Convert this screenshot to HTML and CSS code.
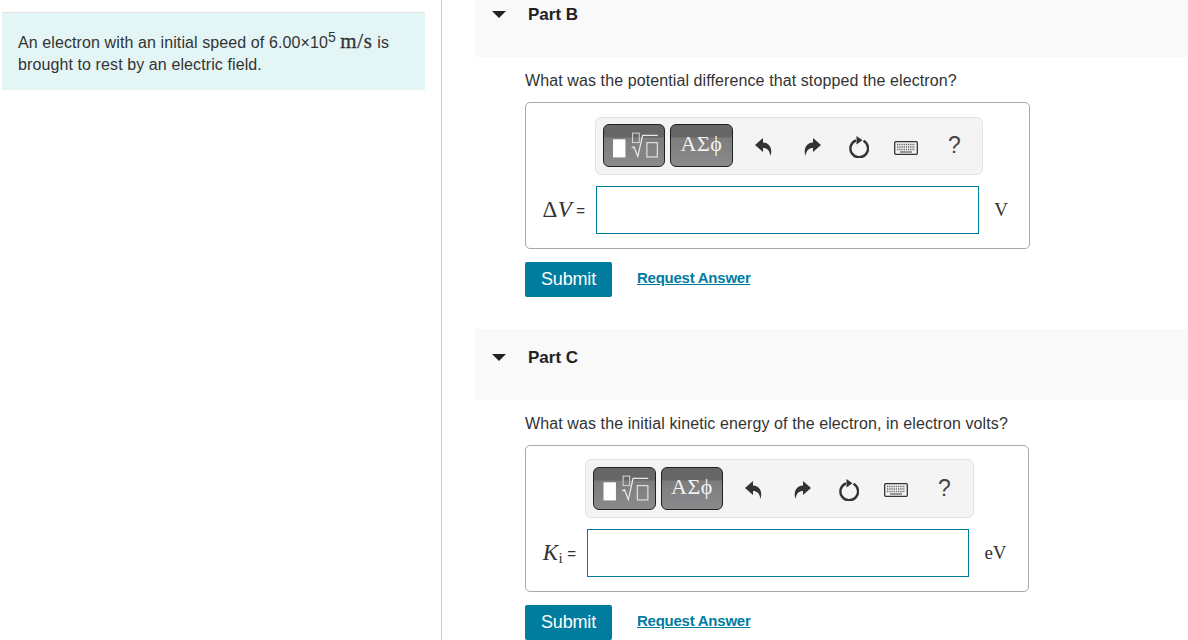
FILE: index.html
```html
<!DOCTYPE html>
<html lang="en">
<head>
<meta charset="utf-8">
<title>Electron stopped by an electric field</title>
<link rel="stylesheet" href="styles.css">
</head>
<body>
<svg class="defs" width="0" height="0" aria-hidden="true">
  <symbol id="i-undo" viewBox="0 0 18 18"><path d="M8 0 0 7l8 7v-4c4 0 6.500 2 7.500 8C18 10 14 4.500 8 4.500z" fill="#333"/></symbol>
  <symbol id="i-redo" viewBox="0 0 18 18"><path d="M10 0l8 7-8 7v-4c-4 0-6.500 2-7.500 8C0 10 4 4.500 10 4.500z" fill="#333"/></symbol>
  <symbol id="i-reset" viewBox="0 0 20 22"><path d="M7 4.300A8.800 8.800 0 1 0 14.500 4.800" fill="none" stroke="#333" stroke-width="2.400"/><path d="M7.500 0v8.500L13.500 4.200z" fill="#333"/></symbol>
  <symbol id="i-keys" viewBox="0 0 24 14"><rect x=".7" y=".7" width="22.600" height="12.600" rx="1" fill="#f4f4f4" stroke="#333" stroke-width="1.300"/><path d="M3 3.500h18M3 6h18M3 8.500h18" stroke="#666" stroke-width="1.300" stroke-dasharray="1.300 .9"/><path d="M6 11h12" stroke="#666" stroke-width="1.300"/></symbol>
  <symbol id="i-templates" viewBox="0 0 62 43"><rect x="9" y="15" width="13" height="19" fill="#fff"/><rect x="29.500" y="8.500" width="7" height="10" fill="none" stroke="#ddd"/><path d="M28.500 24l2.500-1 4 10 5-22h16" fill="none" stroke="#e8e8e8" stroke-width="1.300"/><rect x="44.500" y="18.500" width="11" height="15" fill="none" stroke="#ddd" stroke-width="1.300"/></symbol>
</svg>
<div class="page">
  <aside class="side">
    <div class="intro">
      An electron with an initial speed of 6.00×10<sup class="pow">5</sup> <span class="math-unit">m/s</span> is brought to rest by an electric field.
    </div>
  </aside>
  <main class="main">
    <section class="part part-b">
      <h2 class="part-head"><span class="caret"></span><span class="part-title">Part B</span></h2>
      <p class="question">What was the potential difference that stopped the electron?</p>
      <div class="answer">
        <div class="toolbar">
          <span class="tool-btn tool-tpl"><svg class="tpl-icon"><use href="#i-templates"/></svg></span>
          <span class="tool-btn tool-sym">ΑΣϕ</span>
          <svg class="ico ico-undo"><use href="#i-undo"/></svg>
          <svg class="ico ico-redo"><use href="#i-redo"/></svg>
          <svg class="ico ico-reset"><use href="#i-reset"/></svg>
          <svg class="ico ico-keys"><use href="#i-keys"/></svg>
          <span class="help">?</span>
        </div>
        <div class="entry">
          <span class="label"><span class="math">Δ<i>V</i></span><span class="eq">=</span></span>
          <input class="field" type="text" aria-label="Delta V">
          <span class="unit">V</span>
        </div>
      </div>
      <div class="actions">
        <button class="submit" type="button">Submit</button>
        <a class="reveal" href="#">Request Answer</a>
      </div>
    </section>
    <section class="part part-c">
      <h2 class="part-head"><span class="caret"></span><span class="part-title">Part C</span></h2>
      <p class="question">What was the initial kinetic energy of the electron, in electron volts?</p>
      <div class="answer">
        <div class="toolbar">
          <span class="tool-btn tool-tpl"><svg class="tpl-icon"><use href="#i-templates"/></svg></span>
          <span class="tool-btn tool-sym">ΑΣϕ</span>
          <svg class="ico ico-undo"><use href="#i-undo"/></svg>
          <svg class="ico ico-redo"><use href="#i-redo"/></svg>
          <svg class="ico ico-reset"><use href="#i-reset"/></svg>
          <svg class="ico ico-keys"><use href="#i-keys"/></svg>
          <span class="help">?</span>
        </div>
        <div class="entry">
          <span class="label"><span class="math"><i>K</i><sub class="idx">i</sub></span><span class="eq">=</span></span>
          <input class="field" type="text" aria-label="K i">
          <span class="unit">eV</span>
        </div>
      </div>
      <div class="actions">
        <button class="submit" type="button">Submit</button>
        <a class="reveal" href="#">Request Answer</a>
      </div>
    </section>
  </main>
</div>
</body>
</html>
```
FILE: styles.css
```css
* { box-sizing: border-box; }
html, body { margin: 0; padding: 0; height: 640px; overflow: hidden; background: #fff; }
body { font-family: "Liberation Sans", Arial, sans-serif; font-size: 16px; color: #333; }
.defs { position: absolute; }
.page { display: flex; height: 640px; }

.side { width: 442px; flex: none; border-right: 1px solid #ccc; padding: 12px 16px 0 2px; }
.intro { height: 78px; background: #e4f5f6; border-top: 1px solid #e0e0e0; padding: 17px 16px 0; line-height: 22px; letter-spacing: .1px; }
.pow { font-size: 14px; line-height: 0; vertical-align: 6px; letter-spacing: 0; }
.math-unit { font-family: "Liberation Serif", serif; font-size: 21px; letter-spacing: .7px; -webkit-text-stroke: .3px #333; }

.main { flex: 1; padding-left: 33px; min-width: 0; }
.part-head { margin: 0; display: flex; align-items: flex-start; background: #f9f9f9; font-size: 17px; font-weight: 700; color: #222; }
.part-b .part-head { height: 57px; padding: 5px 0 0 17px; }
.part-c .part-head { height: 71px; padding: 19px 0 0 17px; margin-top: 32px; }
.caret { width: 0; height: 0; margin-top: 6px; border-left: 7px solid transparent; border-right: 7px solid transparent; border-top: 7px solid #222; }
.part-title { margin-left: 22px; line-height: 20px; }

.question { margin: 14px 0 0 50px; line-height: 19px; letter-spacing: .1px; }
.answer { margin: 12px 0 0 50px; border: 1px solid #aaa; border-radius: 5px; }
.part-b .answer { width: 505px; height: 147px; padding-top: 14px; }
.part-c .answer { width: 504px; height: 147px; padding-top: 13px; }

.toolbar { display: flex; align-items: center; background: #f4f4f4; border: 1px solid #e3e3e3; border-radius: 6px; padding-left: 7px; }
.part-b .toolbar { width: 388px; height: 58px; margin-left: 69px; }
.part-c .toolbar { width: 389px; height: 59px; margin-left: 59px; }
.tool-btn { display: block; height: 43px; border: 1px solid #222; border-radius: 6px; flex: none; background: linear-gradient(#666 0, #666 30%, #7d7d7d 31%, #8a8a8d 100%); color: #f2f2f2; }
.part-b .tool-btn { margin-top: -1px; }
.part-b .tool-tpl { width: 62px; }
.part-c .tool-tpl { width: 63px; }
.part-b .tool-sym { width: 63px; margin-left: 5px; }
.part-c .tool-sym { width: 62px; margin-left: 5px; }
.tool-sym { font-family: "Liberation Serif", serif; font-size: 22px; line-height: 38px; text-align: center; letter-spacing: .5px; }
.tpl-icon { display: block; width: 100%; height: 100%; }
.ico { flex: none; display: block; }
.ico-undo, .ico-redo { width: 18px; height: 18px; margin-top: 2px; }
.ico-undo { margin-left: 22px; }
.ico-redo { margin-left: 30px; }
.ico-reset { width: 20px; height: 22px; margin-left: 28px; margin-top: 2px; }
.ico-keys { width: 24px; height: 14px; margin-left: 25px; margin-top: 3px; }
.help { margin-left: 30px; font-size: 23px; color: #444; line-height: 24px; margin-top: -2px; }

.entry { display: flex; align-items: center; margin-top: 11px; padding-right: 6px; }
.label { display: flex; align-items: center; justify-content: flex-end; color: #333; gap: 4px; padding-right: 11px; flex: none; }
.part-b .label { width: 70px; }
.part-c .label { width: 61px; }
.math { font-family: "Liberation Serif", serif; font-size: 23px; letter-spacing: .5px; }
.idx { font-size: 15px; font-style: normal; line-height: 0; vertical-align: -3px; }
.eq { font-size: 15px; }
.field { display: block; height: 48px; border: 1px solid #007c9f; background: #fff; border-radius: 0; padding: 0; flex: none; }
.part-b .field { width: 383px; }
.part-c .field { width: 382px; }
.unit { flex: 1; text-align: center; font-family: "Liberation Serif", serif; font-size: 19px; }

.actions { display: flex; align-items: center; margin: 13px 0 0 50px; }
.submit { width: 87px; height: 35px; background: #007c9f; color: #fff; border: 0; border-radius: 2px; font: 18px "Liberation Sans", sans-serif; padding: 0; letter-spacing: -.15px; }
.reveal { margin-left: 25px; color: #007c9f; font-size: 15px; font-weight: 700; margin-top: -4px; letter-spacing: -.25px; }
```
